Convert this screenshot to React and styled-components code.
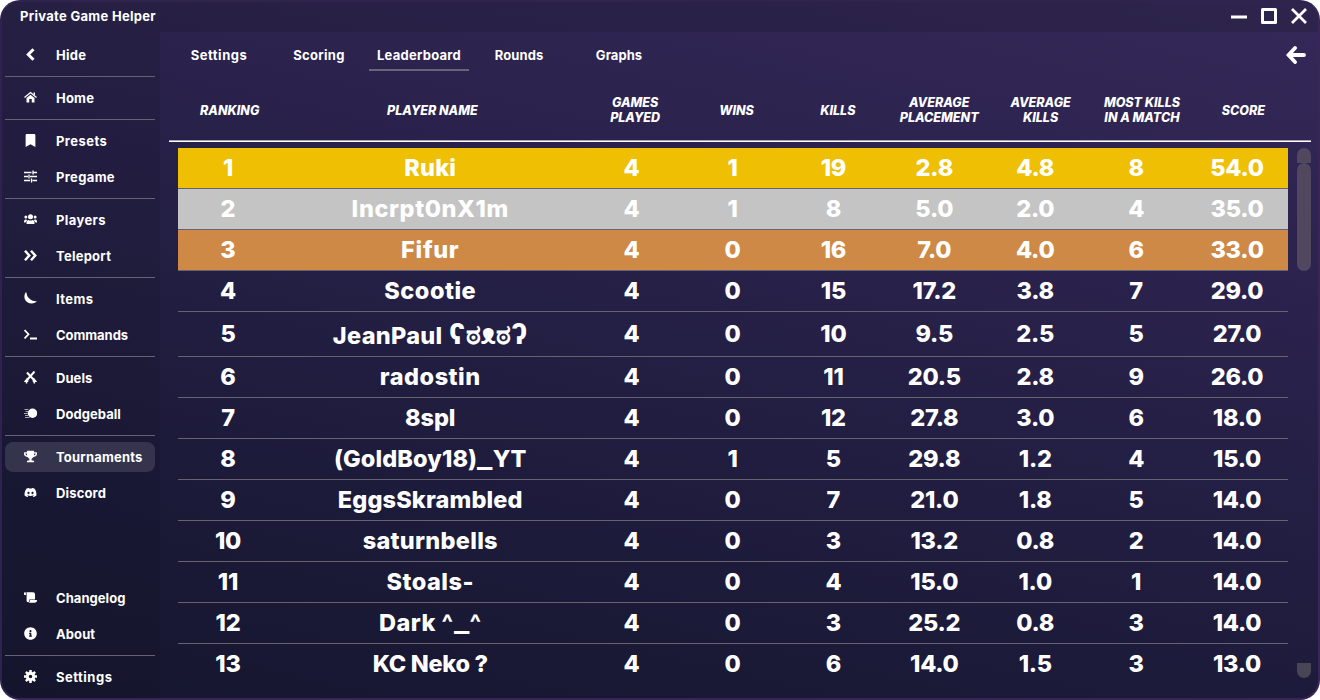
import React from 'react';
import styled, { createGlobalStyle, css } from 'styled-components';
import { FaBookmark, FaInfoCircle, FaTrophy, FaDiscord, FaScroll } from 'react-icons/fa';

const Global = createGlobalStyle`
  * { box-sizing: border-box; }
  body { margin: 0; background: #fff; font-family: Inter, "Noto Sans", sans-serif; color: #fff; overflow: hidden; }
`;

const Window = styled.div`
  width: 1320px;
  height: 700px;
  display: flex;
  flex-direction: column;
  border: 2px solid;
  border-color: #30244f #382657 #382457 #2f2150;
  border-radius: 20px;
  overflow: hidden;
  background: linear-gradient(13deg, #15162f 0%, #1b1a38 25%, #2a224c 68%, #352859 100%);
`;

const TitleBar = styled.header`
  height: 30px;
  flex: none;
  display: flex;
  align-items: center;
  justify-content: space-between;
  padding: 0 11px 2px 18px;
  background: rgba(20, 20, 32, 0.2);
  font-size: 13px;
  font-weight: 700;
  letter-spacing: 0.3px;
`;

const Controls = styled.div`
  display: flex;
  gap: 14px;
  svg { display: block; width: 16px; height: 16px; }
`;

const Body = styled.div`
  flex: 1;
  min-height: 0;
  display: flex;
`;

const Sidebar = styled.nav`
  width: 158px;
  flex: none;
  display: flex;
  flex-direction: column;
  padding: 8px 5px 6px 3px;
  background: rgba(16, 18, 34, 0.16);
`;

const NavGroup = styled.div`
  display: flex;
  flex-direction: column;
  gap: 6px;
  padding-bottom: 6px;
  margin-bottom: 6px;
  border-bottom: 1px solid #65636f;
  ${p => p.$open && css`border-bottom: 0; margin-bottom: auto;`}
  ${p => p.$last && css`border-bottom: 0; margin: 0; padding: 0;`}
`;

const NavItem = styled.div`
  height: 30px;
  display: flex;
  align-items: center;
  gap: 19px;
  padding: 0 0 0 19px;
  border-radius: 8px;
  font-size: 13px;
  font-weight: 700;
  letter-spacing: ${p => p.$ls || 0}px;
  background: ${p => (p.$active ? 'rgba(255,255,255,0.12)' : 'transparent')};
  svg { width: 13px; height: 13px; flex: none; margin-bottom: 2px; }
`;

const Main = styled.main`
  flex: 1;
  min-width: 0;
  display: flex;
  flex-direction: column;
  padding: 8px 7px 0 9px;
`;

const TabBar = styled.div`
  height: 32px;
  display: flex;
  padding-right: 5px;
`;

const Tab = styled.div`
  width: 100px;
  height: 31px;
  padding-top: 7px;
  text-align: center;
  font-size: 13px;
  line-height: 16px;
  font-weight: 700;
  letter-spacing: ${p => p.$ls || 0}px;
  border-bottom: 2px solid ${p => (p.$active ? '#69647a' : 'transparent')};
`;

const Back = styled.div`
  margin-left: auto;
  padding-top: 5px;
  svg { display: block; width: 20px; height: 20px; }
`;

const gridColumns = css`
  display: grid;
  grid-template-columns: 1fr 3fr repeat(7, 1fr);
  align-items: center;
  text-align: center;
`;

const HeaderRow = styled.div`
  ${gridColumns}
  width: 1142px;
  height: 69px;
  padding: 8px 17px 0 10px;
  border-bottom: 1px solid #a5a1b0;
  box-shadow: 0 1px 0 #fff;
  margin-bottom: 1px;
  font-size: 12.5px;
  line-height: 15px;
  font-weight: 800;
  font-style: italic;
  span { white-space: nowrap; }
`;

const ListArea = styled.div`
  flex: 1;
  min-height: 0;
  display: flex;
  justify-content: space-between;
  padding: 6px 0 20px 9px;
`;

const Rows = styled.div`
  width: 1110px;
`;

const Row = styled.div`
  ${gridColumns}
  height: ${p => (p.$tall ? 45 : 41)}px;
  border-bottom: 1px solid ${p => (p.$last ? 'transparent' : '#65636f')};
  background: ${p => p.$bg || 'transparent'};
  background-clip: padding-box;
  font-size: 23.5px;
  line-height: 38px;
  font-weight: 800;
  letter-spacing: -0.25px;
  white-space: nowrap;
`;

const Stat = styled.span`
  padding-right: 1px;
`;

const Name = styled.span`
  letter-spacing: ${p => p.$ls || 0}px;
  padding-top: ${p => (p.$low ? 3 : 0)}px;
`;

const Face = styled.span`
  font-size: 28px;
  line-height: 30px;
`;

const Underscore = styled.span`
  display: inline-block;
  margin: 0 2px;
  transform: scaleX(1.35);
`;

const Track = styled.div`
  width: 14px;
  height: 530px;
  display: flex;
  flex-direction: column;
`;

const ScrollUp = styled.div`
  height: 15px;
  border-radius: 7px 7px 0 0;
  background: #51475f;
`;

const Thumb = styled.div`
  height: 108px;
  border-radius: 7px;
  background: #51475f;
`;

const ScrollDown = styled.div`
  height: 15px;
  margin-top: auto;
  border-radius: 0 0 7px 7px;
  background: #484555;
`;

const Svg = ({ children, box = '0 0 26 26' }) => (
  <svg viewBox={box} fill="none" stroke="#fff" strokeWidth="3">{children}</svg>
);

const ChevronIcon = () => (
  <Svg><path d="M19 2.500 8.500 13 19 23.500" strokeWidth="6" /></Svg>
);
const HomeIcon = () => (
  <Svg><path d="M1 13 13 3 25 13" strokeWidth="2.6" /><path d="M19 3h3v6l-3-3z" fill="#fff" stroke="none" /><path d="M5 14 13 7.5 21 14v9h-5.5v-7h-5v7H5z" fill="#fff" stroke="none" /></Svg>
);
const TuneIcon = () => (
  <Svg><path d="M0 5h15M19 5h7M18 1v8M0 13h8M12 13h14M10 9v8M0 21h12M17 21h9M15 17v8" strokeWidth="2.6" /></Svg>
);
const GroupIcon = () => (
  <Svg><g fill="#fff" stroke="none"><circle cx="13" cy="7.500" r="5" /><circle cx="3.7" cy="8" r="3" /><circle cx="22.3" cy="8" r="3" /><path d="M5 22v-2c0-4 2-6 4-6 2 1.500 6 1.500 8 0 2 0 4 2 4 6v2zM0 18c0-3 1-5 3-5h2l1 2-3 4H0zM26 18c0-3-1-5-3-5h-2l-1 2 3 4h3z" /></g></Svg>
);
const TeleportIcon = () => (
  <Svg><path d="m2 3.500 8.500 9.500L2 22.500M14 3.500l8.500 9.500-8.500 9.500" strokeWidth="5" /></Svg>
);
const MoonIcon = () => (
  <Svg><path d="M3 1c-6 11 1 22 12 22 5 0 9-2 11-5-4 1-9 0-13-3C8 11 5 7 5 1z" fill="#fff" stroke="none" /></Svg>
);
const PromptIcon = () => (
  <Svg><path d="m1 4 8 8.500-8 8.500M12 21h14" strokeWidth="3.600" /></Svg>
);
const DuelIcon = () => (
  <Svg><path d="M6 3 20 18M21 1 6 18" strokeWidth="4" /><path d="M7 14 1 21h7zM19 14l6 7h-7z" fill="#fff" strokeWidth="2" /><path d="M5 22v3M20 20l1 5" /></Svg>
);
const BallIcon = () => (
  <Svg><path d="M1 5h8M3 9h5M0 13h7M2 17h6M2 21h9" stroke="#aaa8b5" strokeWidth="2.400" /><circle cx="17" cy="12.500" r="9.500" fill="#fff" stroke="none" /></Svg>
);
const GearIcon = () => (
  <Svg>
    <circle cx="13" cy="13" r="6.500" strokeWidth="6" />
    <path d="M13 0v6M13 20v6M0 13h6M20 13h6M3.800 3.800l4.300 4.300M17.900 17.900l4.300 4.300M3.800 22.200l4.300-4.300M17.900 8.100l4.300-4.300" strokeWidth="5" />
  </Svg>
);

const navGroups = [
  { items: [['Hide', ChevronIcon, 0.3]] },
  { items: [['Home', HomeIcon, 0.2]] },
  { items: [['Presets', FaBookmark, 0.45], ['Pregame', TuneIcon, 0.35]] },
  { items: [['Players', GroupIcon, 0.4], ['Teleport', TeleportIcon, 0.25]] },
  { items: [['Items', MoonIcon, 0.4], ['Commands', PromptIcon, -0.05]] },
  { items: [['Duels', DuelIcon, 0.05], ['Dodgeball', BallIcon, 0.05]] },
  { open: true, items: [['Tournaments', FaTrophy, 0.2], ['Discord', FaDiscord, 0.15]] },
  { items: [['Changelog', FaScroll, 0.05], ['About', FaInfoCircle, 0.1]] },
  { last: true, items: [['Settings', GearIcon, 0.5]] },
];

const tabs = [['Settings', 0.5], ['Scoring', 0.3], ['Leaderboard', 0.25], ['Rounds', 0.1], ['Graphs', 0.05]];

const headers = [
  ['RANKING'], ['PLAYER NAME'], ['GAMES', 'PLAYED'], ['WINS'], ['KILLS'],
  ['AVERAGE', 'PLACEMENT'], ['AVERAGE', 'KILLS'], ['MOST KILLS', 'IN A MATCH'], ['SCORE'],
];

const medals = ['#efbf04', '#c4c4c4', '#ce8946'];

const players = [
  ['Ruki', 0.2, 4, 1, 19, '2.8', '4.8', 8, '54.0'],
  ['Incrpt0nX1m', 0.6, 4, 1, 8, '5.0', '2.0', 4, '35.0'],
  ['Fifur', 0.7, 4, 0, 16, '7.0', '4.0', 6, '33.0'],
  ['Scootie', 0.5, 4, 0, 15, '17.2', '3.8', 7, '29.0'],
  ['JeanPaul', 0.3, 4, 0, 10, '9.5', '2.5', 5, '27.0'],
  ['radostin', 0.5, 4, 0, 11, '20.5', '2.8', 9, '26.0'],
  ['8spl', -0.1, 4, 0, 12, '27.8', '3.0', 6, '18.0'],
  ['(GoldBoy18)_YT', 0.1, 4, 1, 5, '29.8', '1.2', 4, '15.0'],
  ['EggsSkrambled', 0.15, 4, 0, 7, '21.0', '1.8', 5, '14.0'],
  ['saturnbells', 0.3, 4, 0, 3, '13.2', '0.8', 2, '14.0'],
  ['Stoals-', 0.5, 4, 0, 4, '15.0', '1.0', 1, '14.0'],
  ['Dark ^_^', 0.5, 4, 0, 3, '25.2', '0.8', 3, '14.0'],
  ['KC Neko ?', -0.3, 4, 0, 6, '14.0', '1.5', 3, '13.0'],
];

const renderName = name => {
  const [before, after] = name.split('_');
  return after === undefined ? name : <>{before}<Underscore>_</Underscore>{after}</>;
};

export default function App() {
  return (
    <>
      <Global />
      <Window>
        <TitleBar>
          <span>Private Game Helper</span>
          <Controls>
            <Svg box="0 0 16 16"><path d="M0 9h16" /></Svg>
            <Svg box="0 0 16 16"><rect x="1.500" y="1.500" width="13" height="13" strokeLinejoin="round" /></Svg>
            <Svg box="0 0 16 16"><path d="M1 1 15 15M15 1 1 15" strokeWidth="2.800" /></Svg>
          </Controls>
        </TitleBar>
        <Body>
          <Sidebar>
            {navGroups.map((g, i) => (
              <NavGroup key={i} $open={g.open} $last={g.last}>
                {g.items.map(([label, Icon, ls]) => (
                  <NavItem key={label} $ls={ls} $active={label === 'Tournaments'}><Icon />{label}</NavItem>
                ))}
              </NavGroup>
            ))}
          </Sidebar>
          <Main>
            <TabBar>
              {tabs.map(([t, ls]) => <Tab key={t} $ls={ls} $active={t === 'Leaderboard'}>{t}</Tab>)}
              <Back>
                <Svg box="0 0 20 20"><path d="M2.500 10H18M9 3 2.500 10 9 17" strokeWidth="3.800" strokeLinecap="round" /></Svg>
              </Back>
            </TabBar>
            <HeaderRow>
              {headers.map(h => <div key={h.join()}>{h.map(l => <div key={l}><span>{l}</span></div>)}</div>)}
            </HeaderRow>
            <ListArea>
              <Rows>
                {players.map(([name, ls, ...stats], i) => (
                  <Row key={name} $bg={medals[i]} $tall={i === 4} $last={i === 12}>
                    <Stat>{i + 1}</Stat>
                    <Name $ls={ls} $low={i === 4}>{renderName(name)}{i === 4 && <Face> ʕಠᴥಠʔ</Face>}</Name>
                    {stats.map((s, j) => <Stat key={j}>{s}</Stat>)}
                  </Row>
                ))}
              </Rows>
              <Track><ScrollUp /><Thumb /><ScrollDown /></Track>
            </ListArea>
          </Main>
        </Body>
      </Window>
    </>
  );
}
